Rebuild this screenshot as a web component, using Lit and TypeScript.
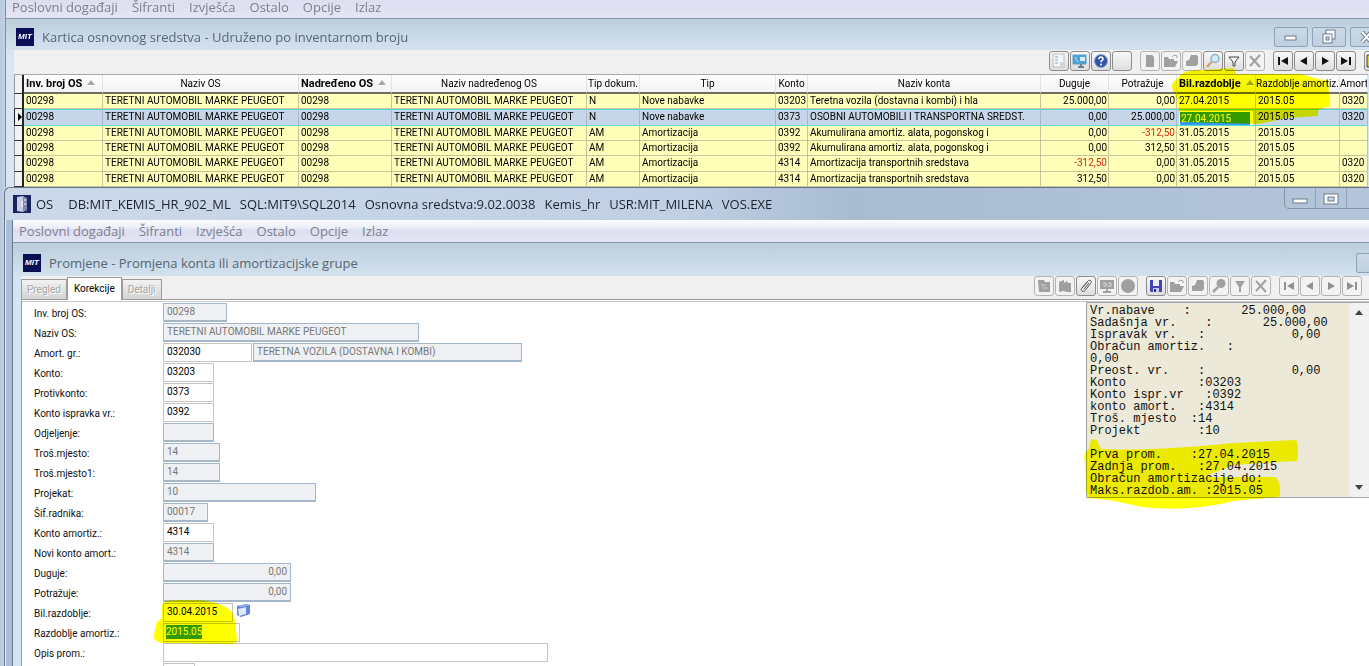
import { LitElement, html, svg, css, nothing } from "lit";
import { customElement, property } from "lit/decorators.js";
import { classMap } from "lit/directives/class-map.js";

const UI = css`Roboto, "Liberation Sans", sans-serif`;
const CHROME = css`"Open Sans", "Noto Sans", sans-serif`;

/* Toolbar glyphs on a 16x16 grid. */
const icons: Record<string, unknown> = {
  list: svg`<rect x="2" y="1" width="11" height="13" fill="#f4f6f8" stroke="#b4bec6"/><path d="M4 4h3M4 7h3M4 10h3" stroke="#7fa7c4"/><path d="M9 10h3M9 12h3" stroke="#b4b4b4"/>`,
  monitor: svg`<rect x="1" y="2" width="13" height="9" fill="#49a3dc" stroke="#5f9cc4"/><rect x="8" y="4" width="5" height="4" fill="#d9eefa"/><path d="M3 4l3 5" stroke="#bfe4fa"/><path d="M6 14h6M9 11v3" stroke="#6b7f90" stroke-width="2"/>`,
  help: svg`<circle cx="8" cy="8" r="6.5" fill="#2f55a8" stroke="#8fa3cc"/><path d="M5.8 6.2c0-3 4.4-2.7 4.2-.2-.1 1.400-2 1.500-2 3.200" fill="none" stroke="#fff" stroke-width="1.600"/><circle cx="8" cy="11.500" r="1" fill="#fff"/>`,
  blank: nothing,
  page: svg`<path d="M4 2h6l2 2v10H4z" fill="#a0a0a0"/>`,
  folder: svg`<path d="M1 14V4h4l1 2h5v2h4l-3 6z" fill="#a0a0a0"/><path d="M9 4l2-2 3 1v2" fill="none" stroke="#a0a0a0"/>`,
  print: svg`<path d="M2 13V8l3-1 2-5h6l1 2v7l-2 2z" fill="#a0a0a0"/>`,
  find: svg`<circle cx="10" cy="5.500" r="4" fill="#cfeaf8" stroke="#8fb0c6" stroke-width="1.500"/><path d="M6.500 9L2 14" stroke="#d8a06a" stroke-width="2.500"/>`,
  findOff: svg`<circle cx="10" cy="5.500" r="4.500" fill="#a0a0a0"/><path d="M7 9l-5 5" stroke="#a0a0a0" stroke-width="2.500"/>`,
  filter: svg`<path d="M3 4h10L9 9v4H7V9z" fill="#f8f8f8" stroke="#444"/>`,
  filterOff: svg`<path d="M3 3h10L9 9v5H7V9z" fill="#a0a0a0"/>`,
  cross: svg`<path d="M3 3l10 11M13 2L3 13" stroke="#a0a0a0" stroke-width="2"/>`,
  first: svg`<path d="M3 4h2v8H3zM13 4v8L6 8z" fill="currentColor"/>`,
  prev: svg`<path d="M11 4v8L4 8z" fill="currentColor"/>`,
  next: svg`<path d="M5 4v8l7-4z" fill="currentColor"/>`,
  last: svg`<path d="M11 4h2v8h-2zM3 4v8l7-4z" fill="currentColor"/>`,
  exit: svg`<path d="M1 2h7v12H1z" fill="#d8cf3a" stroke="#444"/>`,
  copyOff: svg`<path d="M2 2h6l1 2h5v10H3z" fill="#a0a0a0"/><path d="M5 7h5M6 10h6" stroke="#d0d0d0"/>`,
  mapOff: svg`<path d="M2 4l5-2v3l3-2 1 2h3v9H9l-2-1-5 1z" fill="#a0a0a0"/>`,
  clip: svg`<path d="M4.500 9.500L10 3c1.800-1.800 4.200.2 2.800 2.200L7 12.500c-1.800 2.200-5 .2-3.400-2.200L9 4.500M6 11l5-6" fill="none" stroke="#555"/>`,
  monitorOff: svg`<path d="M1 2h14v9H1z" fill="#a0a0a0"/><path d="M4 14h8M8 10v4" stroke="#a0a0a0" stroke-width="2"/><path d="M4 5h3v3H4M9 5h3v3H9" fill="none" stroke="#ddd"/>`,
  discOff: svg`<circle cx="8" cy="8" r="7" fill="#a0a0a0"/>`,
  save: svg`<path d="M2 2h12v12H3l-1-1z" fill="#4444b4"/><rect x="5" y="2" width="6" height="6" fill="#e8eef8"/><rect x="5" y="10" width="6" height="4" fill="#c4cae8"/><rect x="6" y="11" width="2" height="3" fill="#2c2ca0"/>`,
};

const labels: Record<string, string> = {
  list: "Popis", monitor: "Prikaz", help: "Pomoć", blank: "Prazno", page: "Novi", folder: "Otvori",
  print: "Ispis", find: "Traži", findOff: "Traži", filter: "Filter", filterOff: "Filter", cross: "Briši",
  first: "Prvi", prev: "Prethodni", next: "Sljedeći", last: "Zadnji", exit: "Izlaz", copyOff: "Kopiraj",
  mapOff: "Mapa", clip: "Privitak", monitorOff: "Prikaz", discOff: "Stop", save: "Spremi",
};

const OFF = new Set(["page", "folder", "print", "findOff", "filterOff", "cross", "copyOff", "mapOff", "monitorOff", "discOff"]);

@customElement("tool-bar")
class ToolBar extends LitElement {
  @property({ attribute: false }) groups: string[][] = [];
  @property({ type: Boolean }) dim = false;

  static styles = css`
    :host { display: flex; justify-content: flex-end; gap: 8px; flex: none; }
    .group { display: flex; gap: 1px; }
    button {
      width: 20px; height: 20px; padding: 1px; box-sizing: border-box;
      border: 1px solid #8c8c8c; border-radius: 3px; color: #111;
      background: linear-gradient(#f8f8f8, #dedede);
      display: flex; align-items: center; justify-content: center;
    }
    button.off { border-color: #b4b4b4; background: #f3f3f3; color: #909090; }
    svg { width: 16px; height: 16px; flex: none; }
  `;

  render() {
    return this.groups.map((g) => html`<div class="group">${g.map((name) => {
      const off = OFF.has(name) || (this.dim && ["first", "prev", "next", "last"].includes(name));
      return html`<button class=${classMap({ off })} ?disabled=${off} aria-label=${labels[name]}>
        <svg viewBox="0 0 16 16">${icons[name]}</svg></button>`;
    })}</div>`);
  }
}

@customElement("menu-bar")
class MenuBar extends LitElement {
  @property({ type: Boolean, reflect: true }) tight = false;

  static styles = css`
    :host { display: block; flex: none; }
    nav {
      display: flex; gap: 14px; padding: 2px 6px; align-items: center;
      font: 13px/18px ${CHROME}; border-bottom: 1px solid #8496a8;
      background: linear-gradient(#fbfcfe 0, #eceef8 35%, #dcdff0 45%, #e4e4f5 100%);
    }
    :host([tight]) nav { line-height: 14px; padding: 0 6px 4px; background: linear-gradient(#dcdff0, #e4e4f5); }
    a { color: #80808c; text-decoration: none; white-space: nowrap; }
  `;

  render() {
    return html`<nav>${["Poslovni događaji", "Šifranti", "Izvješća", "Ostalo", "Opcije", "Izlaz"]
      .map((t) => html`<a href="#">${t}</a>`)}</nav>`;
  }
}

type Row = [string, string, string, string, string, string, string, string, string];
const rows: Row[] = [
  ["N", "Nove nabavke", "03203", "Teretna vozila (dostavna i kombi) i hla", "25.000,00", "0,00", "27.04.2015", "2015.05", "0320"],
  ["N", "Nove nabavke", "0373", "OSOBNI AUTOMOBILI I TRANSPORTNA SREDST.", "0,00", "25.000,00", "27.04.2015", "2015.05", "0320"],
  ["AM", "Amortizacija", "0392", "Akumulirana amortiz. alata, pogonskog i", "0,00", "-312,50", "31.05.2015", "2015.05", ""],
  ["AM", "Amortizacija", "0392", "Akumulirana amortiz. alata, pogonskog i", "0,00", "312,50", "31.05.2015", "2015.05", ""],
  ["AM", "Amortizacija", "4314", "Amortizacija transportnih sredstava", "-312,50", "0,00", "31.05.2015", "2015.05", "0320"],
  ["AM", "Amortizacija", "4314", "Amortizacija transportnih sredstava", "312,50", "0,00", "31.05.2015", "2015.05", "0320"],
];
const ASSET = "TERETNI AUTOMOBIL MARKE PEUGEOT";

@customElement("asset-grid")
class AssetGrid extends LitElement {
  static styles = css`
    :host { display: block; position: relative; }
    table {
      width: 100%; height: 113px; table-layout: fixed; border-collapse: separate; border-spacing: 0;
      font: 10px/14px ${UI}; color: #000; border-top: 1px solid #a8a8a8; background: #fff;
    }
    th, td { padding: 0 2px; white-space: nowrap; overflow: hidden; text-align: left; box-sizing: border-box; }
    th {
      height: 19px; font-weight: 400; text-align: center; border-bottom: 2px solid #6e6e60; padding: 0;
      border-right: 1px solid #e2e2e2; background: linear-gradient(#fff, #f2f2f4);
    }
    th.sorted { font-weight: 700; font-size: 11px; text-align: left; padding: 0 2px; }
    th.sorted::after {
      content: ""; display: inline-block; margin-left: 5px; vertical-align: 2px;
      border: 4px solid transparent; border-top: 0; border-bottom: 5px solid #a8a8a8;
    }
    td { background: #ffffb9; border-right: 1px solid #c6c69c; border-bottom: 1px solid #c6c69c; }
    td.num { text-align: right; padding-right: 1px; }
    td.neg { color: #d42a10; }
    .mark { background: #f2f2f2; border-right: 2px solid #222; border-bottom: 1px solid #333; border-left: 1px solid #999; padding: 0; }
    tr.sel td { background: #c6d5e8; border-bottom-color: #58dcd8; border-right-color: #a8b8cc; box-shadow: inset 0 1px #58dcd8; }
    tr.sel td.mark { background: #f2f2f2; border-color: #222; box-shadow: none; }
    .mark i { display: block; margin-left: 3px; width: 0; border: 4px solid transparent; border-left: 4px solid #000; border-right: 0; }
    .edit { display: block; margin: 1px 0 0; padding-left: 1px; background: #3399ff; color: #fff; line-height: 13px; border: solid #fff; border-width: 1px 3px 0 1px; }
    .ind { width: 10px } .inv { width: 79px } .nam { width: 196px } .par { width: 93px }
    .pnm { width: 195px } .doc { width: 53px } .typ { width: 136px } .acc { width: 32px }
    .amt { width: 68px } .per { width: 79px } .dep { width: 84px } .grp { width: 28px }
    .pen { position: absolute; right: 0; top: -8px; width: 210px; height: 60px; mix-blend-mode: multiply; pointer-events: none; }
  `;

  render() {
    return html`
      <table>
        <colgroup>
          <col class="ind"><col class="inv"><col class="nam"><col class="par"><col class="pnm"><col class="doc">
          <col class="typ"><col class="acc"><col><col class="amt"><col class="amt"><col class="per"><col class="dep"><col class="grp">
        </colgroup>
        <thead><tr>
          <th class="mark"></th><th class="sorted">Inv. broj OS</th><th>Naziv OS</th><th class="sorted">Nadređeno OS</th>
          <th>Naziv nadređenog OS</th><th>Tip dokum.</th><th>Tip</th><th>Konto</th><th>Naziv konta</th>
          <th>Duguje</th><th>Potražuje</th><th class="sorted">Bil.razdoblje</th><th>Razdoblje amortiz.</th><th>Amort</th>
        </tr></thead>
        <tbody>${rows.map((r, i) => html`<tr class=${classMap({ sel: i === 1 })}>
          <td class="mark">${i === 1 ? html`<i></i>` : nothing}</td>
          <td>00298</td><td>${ASSET}</td><td>00298</td><td>${ASSET}</td>
          ${r.map((c, k) => html`<td class=${classMap({ num: k === 4 || k === 5, neg: c.startsWith("-") })}>${
            i === 1 && k === 6 ? html`<span class="edit">${c}</span>` : c}</td>`)}
        </tr>`)}</tbody>
      </table>
      <svg class="pen" viewBox="0 0 210 60"><path fill="#ff0" d="M20 12C24 4 36 4 46 4L76 2 78 8 140 8C152 9 156 14 170 14L172 40 168 41 160 44V50L128 52 100 58 22 56 20 36 16 26C12 20 14 16 20 12z"/></svg>
    `;
  }
}

interface Field { id: string; label: string; value: string; w: string; off?: boolean; num?: boolean; extra?: string; cal?: boolean; sel?: boolean }
const fields: Field[] = [
  { id: "inv", label: "Inv. broj OS:", value: "00298", w: "w64", off: true },
  { id: "naziv", label: "Naziv OS:", value: ASSET, w: "w256", off: true },
  { id: "gr", label: "Amort. gr.:", value: "032030", w: "w89", extra: "TERETNA VOZILA (DOSTAVNA I KOMBI)" },
  { id: "konto", label: "Konto:", value: "03203", w: "w51" },
  { id: "protiv", label: "Protivkonto:", value: "0373", w: "w51" },
  { id: "ispr", label: "Konto ispravka vr.:", value: "0392", w: "w51" },
  { id: "odj", label: "Odjeljenje:", value: "", w: "w51", off: true },
  { id: "mj", label: "Troš.mjesto:", value: "14", w: "w57", off: true },
  { id: "mj1", label: "Troš.mjesto1:", value: "14", w: "w57", off: true },
  { id: "proj", label: "Projekat:", value: "10", w: "w153", off: true },
  { id: "rad", label: "Šif.radnika:", value: "00017", w: "w45", off: true },
  { id: "kam", label: "Konto amortiz.:", value: "4314", w: "w51" },
  { id: "nkam", label: "Novi konto amort.:", value: "4314", w: "w51", off: true },
  { id: "dug", label: "Duguje:", value: "0,00", w: "w128", off: true, num: true },
  { id: "pot", label: "Potražuje:", value: "0,00", w: "w128", off: true, num: true },
  { id: "bil", label: "Bil.razdoblje:", value: "30.04.2015", w: "w70", cal: true },
  { id: "raz", label: "Razdoblje amortiz.:", value: "2015.05", w: "w77", sel: true },
  { id: "opis", label: "Opis prom.:", value: "", w: "w385" },
  { id: "dalje", label: "", value: "", w: "w32" },
];

@customElement("change-form")
class ChangeForm extends LitElement {
  static styles = css`
    :host { display: block; position: relative; }
    form { display: grid; grid-auto-rows: 19px; gap: 1px; padding-top: 3px; font: 10px/16px ${UI}; }
    .row { display: grid; grid-template-columns: 129px 1fr; padding-left: 12px; }
    label { padding-top: 3px; color: #111; white-space: nowrap; }
    .cell { display: flex; gap: 1px; align-items: start; position: relative; }
    input {
      box-sizing: border-box; height: 19px; padding: 0 3px 2px; margin: 0; outline: 0;
      border: 1px solid #c4c4c4; border-radius: 0; font: inherit; color: #000; background: #fff;
    }
    input.off { background: #eef0f3; color: #787878; border: 1px solid #a4b6c8; border-bottom-width: 2px; padding-bottom: 1px; }
    input.num { text-align: right; }
    .w32 { width: 32px } .w45 { width: 45px } .w51 { width: 51px } .w57 { width: 57px } .w64 { width: 64px }
    .w70 { width: 70px } .w77 { width: 77px } .w89 { width: 89px } .w128 { width: 128px } .w153 { width: 153px }
    .w256 { width: 256px } .w269 { width: 269px } .w385 { width: 385px }
    .value { position: absolute; left: 3px; top: 2px; background: #3399ff; color: #fff; line-height: 14px; pointer-events: none; }
    button { border: 0; padding: 0 2px; background: none; height: 16px; }
    .pen { position: absolute; left: 131px; top: 298px; width: 92px; height: 50px; mix-blend-mode: multiply; pointer-events: none; }
  `;

  render() {
    return html`<form>${fields.map((f) => html`<div class="row">
      <label for=${f.id}>${f.label}</label>
      <div class="cell">
        <input id=${f.id} class=${classMap({ [f.w]: true, off: !!f.off, num: !!f.num })} .value=${f.sel ? "" : f.value} ?readonly=${!!f.off}>
        ${f.sel ? html`<span class="value">${f.value}</span>` : nothing}
        ${f.extra ? html`<input class="w269 off" aria-label="Naziv grupe" .value=${f.extra} readonly>` : nothing}
        ${f.cal ? html`<button type="button" aria-label="Kalendar"><svg width="14" height="15" viewBox="0 0 14 15">
          <path d="M1 3l9-2 4 1v9l-9 3-4-2z" fill="#5f84d8"/><path d="M2 6l8-2v7l-7 2z" fill="#dfe9fb"/><path d="M1 3l9-2 4 1-9 2z" fill="#9db8ee"/></svg></button>` : nothing}
      </div></div>`)}</form>
      <svg class="pen" viewBox="0 0 92 50"><path fill="#ff0" d="M9 8C10 1 20 2 40 2 56 2 72 6 79 14L82 22 84 42C84 46 78 47 70 46L10 45C2 44 0 40 1 36L4 24 9 20z"/></svg>`;
  }
}

const summary = `Vr.nabave    :       25.000,00
Sadašnja vr.    :       25.000,00
Ispravak vr.   :            0,00
Obračun amortiz.   :
0,00
Preost. vr.    :            0,00
Konto          :03203
Konto ispr.vr   :0392
konto amort.   :4314
Troš. mjesto  :14
Projekt        :10

Prva prom.    :27.04.2015
Zadnja prom.   :27.04.2015
Obračun amortizacije do:
Maks.razdob.am. :2015.05`;

@customElement("summary-panel")
class SummaryPanel extends LitElement {
  static styles = css`
    :host { display: block; position: relative; }
    .box { display: flex; border: 1px solid #9ea8b0; border-right: 0; box-sizing: border-box; }
    textarea {
      flex: 1; height: 194px; resize: none; overflow: hidden; border: 0; outline: 0; padding: 2px 3px 0; margin: 0;
      box-sizing: border-box; background: #ece9d8; color: #111; font: 12px/12px "Liberation Mono", monospace; white-space: pre;
    }
    .scroll { width: 20px; background: #f1f1f1; display: flex; flex-direction: column; justify-content: space-between; align-items: center; padding: 7px 0; }
    button { border: 4px solid transparent; padding: 0; width: 0; height: 0; background: none; box-sizing: border-box; }
    .up { border-top: 0; border-bottom: 5px solid #444; }
    .down { border-bottom: 0; border-top: 5px solid #444; }
    .pen { position: absolute; left: -3px; top: 131px; width: 230px; height: 80px; mix-blend-mode: multiply; pointer-events: none; }
  `;

  render() {
    return html`<div class="box"><textarea readonly aria-label="Podaci o sredstvu" .value=${summary}></textarea>
      <div class="scroll"><button class="up" aria-label="Gore"></button><button class="down" aria-label="Dolje"></button></div></div>
      <svg class="pen" viewBox="0 0 230 80"><path fill="#ff0" d="M8 6L14 7 18 16C60 18 110 14 150 10L213 7C216 12 215 24 214 28L180 30 150 32 120 44 192 44C198 48 198 60 196 64L150 68C130 74 90 78 60 74L26 67 6 65C1 60 4 50 3 46L2 28C0 22 2 18 6 16z"/></svg>`;
  }
}

@customElement("app-root")
class AppRoot extends LitElement {
  static styles = css`
    :host { display: block; height: 100vh; overflow: hidden; background: linear-gradient(90deg, #c2d0e2, #a4b6cc); font: 12px/16px ${UI}; }
    .page { display: flex; flex-direction: column; height: 100%; background: linear-gradient(90deg, #b8c9de 0, #c4d4e6 6px); }
    .back { flex: none; overflow: hidden; margin-left: 5px; border-left: 1px solid #7d8ea4; background: #d8e5f3; display: flex; flex-direction: column; }
    .title {
      display: flex; align-items: center; gap: 8px; flex: none; height: 31px; padding-left: 10px; padding-top: 5px; box-sizing: border-box;
      font: 13px/18px ${CHROME}; color: #566674; background: linear-gradient(#bccddc, #d4e2f0); white-space: nowrap; overflow: hidden;
    }
    .logo { width: 18px; height: 18px; background: #0a0e54; color: #fff; font: italic 700 8px/17px "Liberation Sans", sans-serif; text-align: center; flex: none; }
    .wins { display: flex; gap: 4px; margin-left: auto; margin-right: -15px; }
    .wins button, .corner {
      width: 34px; height: 20px; padding: 0; border: 1px solid #8fa2b6; border-radius: 2px; background: linear-gradient(#cad8e6, #c0d0e0);
      display: flex; align-items: center; justify-content: center; box-sizing: border-box; flex: none;
    }
    .corner { margin-left: auto; margin-right: -21px; }
    .tools { background: #f0f0f0; height: 24px; margin-left: 8px; padding-top: 1px; box-sizing: border-box; overflow: hidden; flex: none; }
    .tools tool-bar { margin-right: -15px; }
    .back asset-grid { margin: 0 1px 0 8px; }
    .front {
      flex: 1; min-height: 0; overflow: hidden; margin-left: 4px; display: flex; flex-direction: column; position: relative;
      border: solid #66758a; border-width: 1px 0 0 1px; border-radius: 6px 0 0 0; background: #a9bdd6; box-shadow: inset 1px 1px #e6eef8;
    }
    .caption {
      display: flex; align-items: center; height: 32px; padding-left: 8px; gap: 5px; flex: none; color: #1c222c;
      font: 13px/18px ${CHROME}; background: linear-gradient(90deg, #ccd9ea 0, #c0cfe4 50%, #a8bcd2 62%, #b4c5da 100%); border-radius: 6px 0 0 0; white-space: nowrap;
    }
    .facts { display: flex; gap: 9px; }
    .facts b { font-weight: 400; margin-right: 6px; }
    .frame { display: flex; align-self: start; margin-left: auto; margin-right: -15px; border: 1px solid #8496ac; border-top: 0; border-radius: 0 0 5px 5px; }
    .frame button { width: 31px; height: 20px; border: 0; border-right: 1px solid #8fa2b8; padding: 4px 0 0; background: none; }
    .frame button:last-child { width: 36px; border: 0; }
    .inner { margin-left: 7px; border-left: 1px solid #6a7c94; flex: 1; min-height: 0; display: flex; flex-direction: column; background: #d6e3f1; }
    .inner .title { height: 33px; padding-top: 7px; }
    .bar { display: flex; align-items: flex-end; margin-left: 8px; background: #f0f0f0; flex: none; height: 23px; border-bottom: 1px solid #9c9c9c; }
    .bar tool-bar { margin-left: auto; align-self: flex-start; padding-right: 7px; }
    .tab { font: 10px/16px ${UI}; height: 20px; padding: 0 5px; box-sizing: border-box; border: 1px solid #9c9c9c; border-bottom: 0; background: linear-gradient(#f2f2f2, #d4d4d4); color: #a6a6a6; text-shadow: 1px 1px #fff; }
    .tab.on { height: 23px; padding: 0 6px; background: #fff; color: #000; margin-bottom: -1px; }
    .body { flex: 1; min-height: 0; margin-left: 8px; border-left: 1px solid #9c9c9c; background: #fff; display: flex; align-items: flex-start; box-shadow: inset 0 1px #fff, inset 0 2px #c8c8c8; }
    .body change-form { flex: 1; }
    .body summary-panel { width: 283px; margin-top: 2px; }
  `;

  render() {
    return html`<div class="page">
      <section class="back">
        <menu-bar tight></menu-bar>
        <div class="title"><span class="logo">MIT</span><span>Kartica osnovnog sredstva - Udruženo po inventarnom broju</span>
          <div class="wins">
            <button aria-label="Smanji"><svg width="14" height="12"><rect x="1" y="5" width="11" height="4" fill="#fff" stroke="#6a7a8a"/></svg></button>
            <button aria-label="Vrati"><svg width="16" height="16"><rect x="5" y="1" width="9" height="9" fill="#fff" stroke="#6a7a8a"/><rect x="2" y="5" width="9" height="9" fill="#fff" stroke="#6a7a8a"/><rect x="5" y="8" width="3" height="3" fill="#c8d6e4" stroke="#6a7a8a"/></svg></button>
            <button aria-label="Zatvori"><svg width="14" height="12"><path d="M2 1l9 10M11 1L2 11" stroke="#6a7a8a" stroke-width="4"/><path d="M2 1l9 10M11 1L2 11" stroke="#fff" stroke-width="2"/></svg></button>
          </div></div>
        <div class="tools"><tool-bar .groups=${[["list", "monitor", "help", "blank"], ["page", "folder", "print", "find", "filter", "cross"], ["first", "prev", "next", "last"], ["exit"]]}></tool-bar></div>
        <asset-grid></asset-grid>
      </section>
      <section class="front">
        <div class="caption">
          <svg width="18" height="18" viewBox="0 0 18 18"><rect width="18" height="18" fill="#1c2460"/><path d="M4 2l6-1v16l-6-1z" fill="#c8cce0"/><path d="M10 1l4 2v12l-4 2z" fill="#8088b0"/><path d="M11 5h2M11 9h2M9 6v6" stroke="#fff"/></svg>
          <div class="facts"><b>OS</b><span>DB:MIT_KEMIS_HR_902_ML</span><span>SQL:MIT9\\SQL2014</span><span>Osnovna sredstva:9.02.0038</span><span>Kemis_hr</span><span>USR:MIT_MILENA</span><span>VOS.EXE</span></div>
          <div class="frame">
            <button aria-label="Smanji"><svg width="16" height="10"><rect x="1" y="4" width="14" height="4" fill="#fff" stroke="#6a7a8a"/></svg></button>
            <button aria-label="Povećaj"><svg width="16" height="12"><rect x="1" y="1" width="14" height="10" fill="#fff" stroke="#6a7a8a"/><rect x="5" y="4" width="6" height="4" fill="#c8d6e4" stroke="#6a7a8a"/></svg></button>
            <button aria-label="Zatvori"></button>
          </div>
        </div>
        <div class="inner">
          <menu-bar></menu-bar>
          <div class="title"><span class="logo">MIT</span><span>Promjene - Promjena konta ili amortizacijske grupe</span>
            <button class="corner" aria-label="Zatvori"></button></div>
          <div class="bar">
            <button class="tab">Pregled</button><button class="tab on">Korekcije</button><button class="tab">Detalji</button>
            <tool-bar dim .groups=${[["copyOff", "mapOff", "clip", "monitorOff", "discOff"], ["save", "folder", "print", "findOff", "filterOff", "cross"], ["first", "prev", "next", "last"]]}></tool-bar>
          </div>
          <div class="body"><change-form></change-form><summary-panel></summary-panel></div>
        </div>
      </section>
    </div>`;
  }
}
